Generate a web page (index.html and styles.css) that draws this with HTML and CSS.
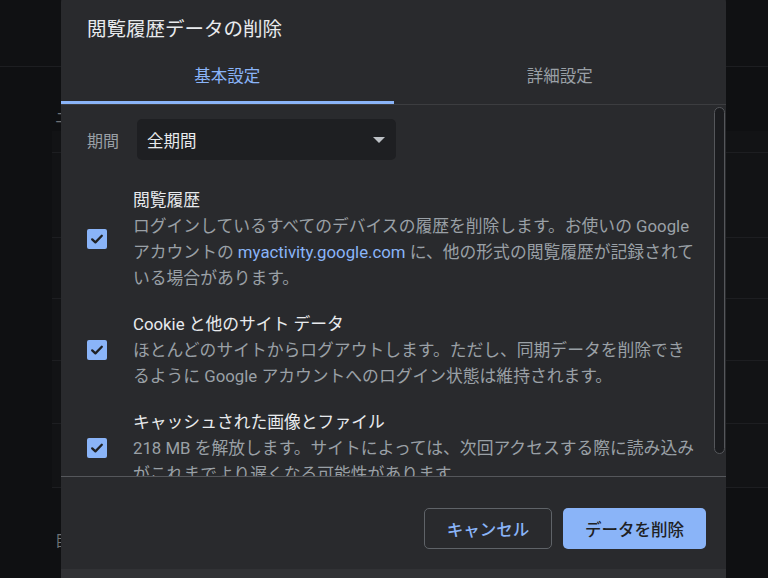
FILE: index.html
```html
<!DOCTYPE html>
<html lang="ja">
<head>
<meta charset="utf-8">
<title>閲覧履歴データの削除</title>
<link rel="stylesheet" href="styles.css">
</head>
<body>
<div class="page">
  <div class="topbar"></div>
  <div class="main">
    <div class="section-label">ユーザー</div>
    <div class="card">
      <div class="row r1"></div>
      <div class="row r2"></div>
      <div class="row r3"></div>
      <div class="row r4"></div>
      <div class="row r5"></div>
      <div class="row r6"></div>
    </div>
    <div class="section-label second">目次</div>
  </div>
</div>

<div class="dialog">
  <h1 class="title">閲覧履歴データの削除</h1>
  <div class="tabs">
    <div class="tab active">基本設定</div>
    <div class="tab">詳細設定</div>
  </div>
  <div class="body">
    <div class="period">
      <span class="period-label">期間</span>
      <div class="select">
        <span>全期間</span>
        <svg class="arrow" width="12" height="6" viewBox="0 0 12 6"><path d="M0 0H12L6 6Z" fill="#bdc1c6"/></svg>
      </div>
    </div>
    <div class="item">
      <div class="check-col"><span class="checkbox"><svg width="20" height="20" viewBox="0 0 20 20"><path d="M5.2 10.4 8.4 13.4 14.8 6.8" fill="none" stroke="#1f2124" stroke-width="2.3" stroke-linecap="round" stroke-linejoin="round"/></svg></span></div>
      <div class="text">
        <div class="item-title">閲覧履歴</div>
        <div class="desc">ログインしているすべてのデバイスの履歴を削除します。お使いの Google<br>アカウントの <span class="link">myactivity.google.com</span> に、他の形式の閲覧履歴が記録されて<br>いる場合があります。</div>
      </div>
    </div>
    <div class="item">
      <div class="check-col"><span class="checkbox"><svg width="20" height="20" viewBox="0 0 20 20"><path d="M5.2 10.4 8.4 13.4 14.8 6.8" fill="none" stroke="#1f2124" stroke-width="2.3" stroke-linecap="round" stroke-linejoin="round"/></svg></span></div>
      <div class="text">
        <div class="item-title">Cookie と他のサイト データ</div>
        <div class="desc">ほとんどのサイトからログアウトします。ただし、同期データを削除でき<br>るように Google アカウントへのログイン状態は維持されます。</div>
      </div>
    </div>
    <div class="item">
      <div class="check-col"><span class="checkbox"><svg width="20" height="20" viewBox="0 0 20 20"><path d="M5.2 10.4 8.4 13.4 14.8 6.8" fill="none" stroke="#1f2124" stroke-width="2.3" stroke-linecap="round" stroke-linejoin="round"/></svg></span></div>
      <div class="text">
        <div class="item-title">キャッシュされた画像とファイル</div>
        <div class="desc">218 MB を解放します。サイトによっては、次回アクセスする際に読み込み<br>がこれまでより遅くなる可能性があります。</div>
      </div>
    </div>
    <div class="scrollbar"></div>
  </div>
  <div class="footer">
    <button class="btn cancel">キャンセル</button>
    <button class="btn primary">データを削除</button>
  </div>
  <div class="bottom-band"></div>
</div>
</body>
</html>
```

FILE: styles.css
```css
html, body {
  margin: 0;
  padding: 0;
}
body {
  width: 768px;
  height: 578px;
  overflow: hidden;
  background: #0f1012;
  font-family: Roboto, "Noto Sans CJK JP", sans-serif;
  position: relative;
}

/* background page */
.page {
  height: 578px;
}
.topbar {
  height: 66px;
  border-bottom: 1px solid #1d1e21;
  background: #101113;
}
.main {
  padding-left: 52px;
}
.section-label {
  color: #6f7276;
  font-size: 15px;
  line-height: 20px;
  padding: 41px 0 0 3px;
  height: 23px;
  white-space: nowrap;
}
.section-label.second {
  padding-top: 43px;
}
.card {
  background: #121315;
}
.row {
  border-bottom: 1px solid #1d1e21;
}
.r1 { height: 21px; }
.r2 { height: 84px; }
.r3 { height: 60px; }
.r4 { height: 61px; }
.r5 { height: 62px; }
.r6 { height: 63px; }

/* dialog */
.dialog {
  position: absolute;
  left: 61px;
  top: -6px;
  width: 665px;
  height: 600px;
  background: #292a2d;
  border-radius: 8px;
  overflow: hidden;
  display: flex;
  flex-direction: column;
}
.title {
  margin: 0;
  padding: 24px 0 0 26px;
  height: 24px;
  font-size: 19.5px;
  line-height: 24px;
  font-weight: 400;
  color: #e8eaed;
}
.tabs {
  display: flex;
  border-bottom: 1px solid #3c3d40;
}
.tab {
  flex: 1;
  text-align: center;
  font-size: 16.5px;
  line-height: 22px;
  padding: 24px 0 16px;
  color: #9aa0a6;
}
.tab.active {
  color: #8ab4f8;
  box-shadow: inset 0 -3px 0 #8ab4f8;
}

.body {
  position: relative;
  height: 371px;
  overflow: hidden;
  padding: 14px 0 0 26px;
  box-sizing: border-box;
  flex: none;
}
.period {
  display: flex;
  align-items: center;
  gap: 18px;
}
.period-label {
  color: #9aa0a6;
  font-size: 16px;
  white-space: nowrap;
  flex: none;
}
.select {
  width: 259px;
  height: 41px;
  box-sizing: border-box;
  background: #1e1f22;
  border-radius: 5px;
  display: flex;
  align-items: center;
  justify-content: space-between;
  padding: 0 11px 0 10px;
  color: #e8eaed;
  font-size: 16.5px;
}
.arrow {
  display: block;
}

.item {
  display: flex;
  align-items: center;
  margin-top: 20px;
}
.period + .item {
  margin-top: 27px;
}
.check-col {
  width: 46px;
  flex: none;
}
.checkbox {
  display: block;
  width: 20px;
  height: 20px;
  background: #8ab4f8;
  border-radius: 2px;
}
.checkbox svg {
  display: block;
}
.text {
  font-size: 16.8px;
  line-height: 26px;
  white-space: nowrap;
}
.item-title {
  color: #e8eaed;
}
.desc {
  color: #9aa0a6;
}
.link {
  color: #8ab4f8;
}

.scrollbar {
  position: absolute;
  right: 1px;
  top: 2px;
  width: 11px;
  height: 347px;
  box-sizing: border-box;
  border: 1px solid #55575b;
  border-radius: 6px;
  background: #1b1c1f;
}

.footer {
  border-top: 1px solid #55575b;
  height: 93px;
  box-sizing: border-box;
  display: flex;
  justify-content: flex-end;
  align-items: flex-start;
  gap: 11px;
  padding: 31px 20px 0 0;
  flex: none;
}
.btn {
  height: 41px;
  border-radius: 5px;
  font-family: Roboto, "Noto Sans CJK JP", sans-serif;
  font-size: 16.5px;
  font-weight: 500;
  padding: 0;
  cursor: pointer;
}
.cancel {
  width: 128px;
  background: transparent;
  border: 1px solid #5f6368;
  color: #8ab4f8;
}
.primary {
  width: 143px;
  background: #8ab4f8;
  border: none;
  color: #202124;
}
.bottom-band {
  flex: 1;
  background: #313235;
}
```
